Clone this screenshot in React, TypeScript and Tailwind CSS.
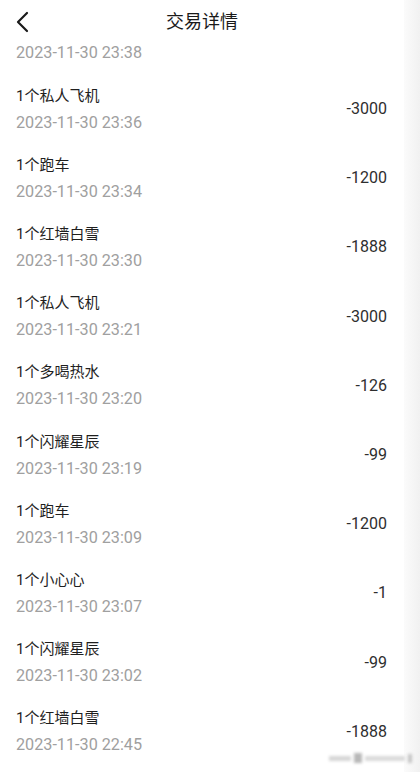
const rows = [
  { title: "1个私人飞机", time: "2023-11-30 23:36", amount: "-3000" },
  { title: "1个跑车", time: "2023-11-30 23:34", amount: "-1200" },
  { title: "1个红墙白雪", time: "2023-11-30 23:30", amount: "-1888" },
  { title: "1个私人飞机", time: "2023-11-30 23:21", amount: "-3000" },
  { title: "1个多喝热水", time: "2023-11-30 23:20", amount: "-126" },
  { title: "1个闪耀星辰", time: "2023-11-30 23:19", amount: "-99" },
  { title: "1个跑车", time: "2023-11-30 23:09", amount: "-1200" },
  { title: "1个小心心", time: "2023-11-30 23:07", amount: "-1" },
  { title: "1个闪耀星辰", time: "2023-11-30 23:02", amount: "-99" },
  { title: "1个红墙白雪", time: "2023-11-30 22:45", amount: "-1888" },
];

function Row({ title, time, amount }: { title: string; time: string; amount: string }) {
  return (
    <div className="flex h-[69.2px] items-center justify-between pl-4 pr-[17px]">
      <div className="flex flex-col pt-[1px]">
        <span className="text-[15px] leading-[20px] text-[#1f1f1f]">{title}</span>
        <span className="mt-[7px] text-[16.2px] leading-[20px] text-[#a0a0a0]">{time}</span>
      </div>
      <span className="mt-[1px] text-[16px] leading-[20px] text-[#2e2e2e]">{amount}</span>
    </div>
  );
}

export default function App() {
  return (
    <div
      className="relative flex h-[772px] w-[420px] overflow-hidden bg-white"
      style={{ fontFamily: 'Roboto, "Noto Sans CJK SC", sans-serif' }}
    >
      <div className="w-[404px] shrink-0">
        <div className="flex h-[44px] items-center pl-[14px]">
          <svg width="18" height="22" viewBox="0 0 18 22" fill="none" className="shrink-0">
            <polyline points="13,2 4,11 13,20" stroke="#1a1a1a" strokeWidth="2.2" strokeLinecap="round" strokeLinejoin="round" />
          </svg>
          <span className="flex-1 pr-[32px] text-center text-[18px] leading-[24px] text-[#1a1a1a]">交易详情</span>
        </div>
        <div className="h-[30px] pl-4 pt-[1px]">
          <span className="block text-[16.2px] leading-[16px] text-[#a0a0a0]">2023-11-30 23:38</span>
        </div>
        {rows.map((r, i) => (
          <Row key={i} {...r} />
        ))}
      </div>
      <div className="flex-1 bg-gradient-to-r from-[#fbfbfb] to-[#f1f1f1]" />
      <div className="absolute bottom-[9px] right-[8px] flex items-center gap-[3px] blur-[1.5px]">
        <div className="h-[5px] w-[22px] bg-[#d6d6d6]" />
        <div className="h-[10px] w-[8px] bg-[#b8b8b8]" />
        <div className="h-[5px] w-[40px] bg-[#dadada]" />
        <div className="h-[9px] w-[4px] bg-[#c4c4c4]" />
      </div>
    </div>
  );
}
